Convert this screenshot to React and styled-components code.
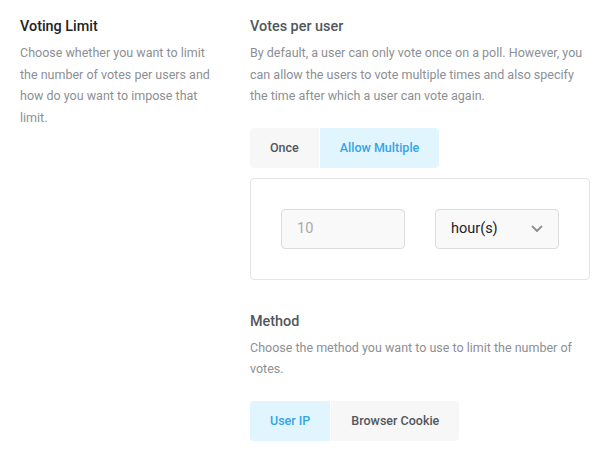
import React, { useState } from "react";
import styled, { createGlobalStyle } from "styled-components";

const Global = createGlobalStyle`
  html, body { margin: 0; padding: 0; background: #ffffff; }
  body { font-family: Roboto, "Liberation Sans", Arial, sans-serif; -webkit-font-smoothing: antialiased; }
  * { box-sizing: border-box; }
`;

const Page = styled.div`
  display: flex;
  gap: 30px;
  padding: 17px 20px 20px 20px;
  width: 610px;
`;

const Aside = styled.div`
  width: 200px;
  flex: none;
`;

const Main = styled.div`
  flex: 1;
  display: flex;
  flex-direction: column;
`;

const Title = styled.h3`
  margin: 0 0 5px 0;
  font-size: 14.4px;
  line-height: 20px;
  font-weight: 500;
  color: ${(p) => (p.$dark ? "#1d2327" : "#50575e")};
`;

const Desc = styled.p`
  margin: 0;
  font-size: 12.5px;
  line-height: 21.6px;
  color: #8c8f94;
`;

const Section = styled.section`
  margin-top: ${(p) => p.$top || 0}px;
`;

const Toggle = styled.div`
  display: inline-flex;
  gap: 1px;
  margin-top: ${(p) => p.$top || 0}px;
  border-radius: 4px;
  overflow: hidden;
`;

const ToggleBtn = styled.button`
  border: none;
  height: 40px;
  padding: 0 20px;
  font-family: inherit;
  font-size: 12.5px;
  font-weight: 500;
  cursor: pointer;
  background: ${(p) => (p.$active ? "#e1f5fe" : "#f7f7f7")};
  color: ${(p) => (p.$active ? "#35a5e8" : "#50575e")};
`;

const Panel = styled.div`
  margin-top: 10px;
  border: 1px solid #e4e4e4;
  border-radius: 4px;
  padding: 30px;
  display: flex;
  gap: 30px;
`;

const Field = styled.div`
  position: relative;
  width: 124px;
  height: 40px;
  border: 1px solid #dcdcde;
  border-radius: 4px;
  background: #f9f9f9;
  display: flex;
  align-items: center;
  padding: 0 15px;
  font-size: 14.5px;
  color: ${(p) => (p.$muted ? "#a7aaad" : "#1d2327")};
  justify-content: space-between;
`;

const NumberInput = styled.input`
  border: none;
  background: transparent;
  width: 100%;
  font-family: inherit;
  font-size: 14.5px;
  color: #a7aaad;
  padding: 0;
  outline: none;
`;

const Chevron = () => (
  <svg width="12" height="8" viewBox="0 0 12 8" fill="none">
    <path d="M1.5 1.5 L6 6 L10.5 1.5" stroke="#8c8f94" strokeWidth="1.8" strokeLinecap="round" strokeLinejoin="round" />
  </svg>
);

export default function App() {
  const [perUser, setPerUser] = useState("multiple");
  const [method, setMethod] = useState("ip");
  return (
    <>
      <Global />
      <Page>
        <Aside>
          <Title $dark>Voting Limit</Title>
          <Desc>
            Choose whether you want to limit the number of votes per users and how do you want to impose that limit.
          </Desc>
        </Aside>
        <Main>
          <Section>
            <Title>Votes per user</Title>
            <Desc>
              By default, a user can only vote once on a poll. However, you can allow the users to vote multiple times and also specify the time after which a user can vote again.
            </Desc>
            <Toggle $top={21}>
              <ToggleBtn $active={perUser === "once"} onClick={() => setPerUser("once")}>Once</ToggleBtn>
              <ToggleBtn $active={perUser === "multiple"} onClick={() => setPerUser("multiple")}>Allow Multiple</ToggleBtn>
            </Toggle>
            <Panel>
              <Field $muted>
                <NumberInput defaultValue="10" />
              </Field>
              <Field>
                <span>hour(s)</span>
                <Chevron />
              </Field>
            </Panel>
          </Section>
          <Section $top={32}>
            <Title>Method</Title>
            <Desc>Choose the method you want to use to limit the number of votes.</Desc>
            <Toggle $top={21}>
              <ToggleBtn $active={method === "ip"} onClick={() => setMethod("ip")}>User IP</ToggleBtn>
              <ToggleBtn $active={method === "cookie"} onClick={() => setMethod("cookie")}>Browser Cookie</ToggleBtn>
            </Toggle>
          </Section>
        </Main>
      </Page>
    </>
  );
}
